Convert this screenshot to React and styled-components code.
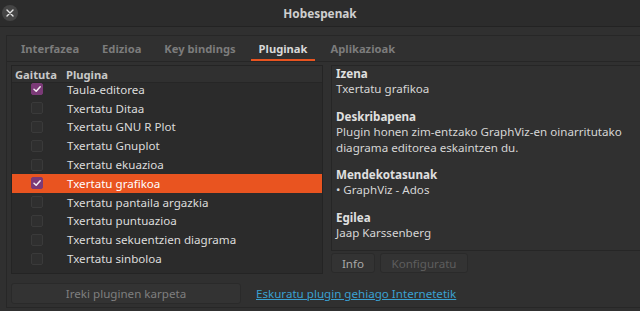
import React from "react";
import styled, { createGlobalStyle } from "styled-components";

const plugins = [
  { name: "Taula-editorea", on: true },
  { name: "Txertatu Ditaa" },
  { name: "Txertatu GNU R Plot" },
  { name: "Txertatu Gnuplot" },
  { name: "Txertatu ekuazioa" },
  { name: "Txertatu grafikoa", on: true, selected: true },
  { name: "Txertatu pantaila argazkia" },
  { name: "Txertatu puntuazioa" },
  { name: "Txertatu sekuentzien diagrama" },
  { name: "Txertatu sinboloa" },
];

const tabs = ["Interfazea", "Edizioa", "Key bindings", "Pluginak", "Aplikazioak"];

function App() {
  return (
    <>
      <GlobalStyle />
      <Window>
        <TitleBar>
          <CloseButton>
            <svg width="8" height="8" viewBox="0 0 8 8">
              <path d="M1 1L7 7M7 1L1 7" stroke="#e6e6e6" strokeWidth="1.4" strokeLinecap="round" />
            </svg>
          </CloseButton>
          <Title>Hobespenak</Title>
          <span />
        </TitleBar>

        <Notebook>
          <TabRow>
            {tabs.map((t) => (
              <Tab key={t} $active={t === "Pluginak"}>
                {t}
              </Tab>
            ))}
          </TabRow>

          <Page>
            <Columns>
              <TreeView>
                <TreeHeader>
                  <HeadCell $w="48px">Gaituta</HeadCell>
                  <HeadCell>Plugina</HeadCell>
                </TreeHeader>
                <RowsViewport>
                  <Rows>
                    {plugins.map((p) => (
                      <Row key={p.name} $selected={p.selected}>
                        <CheckCell>
                          <Check $on={p.on}>
                            {p.on && (
                              <svg width="10" height="10" viewBox="0 0 10 10">
                                <path
                                  d="M2 5.2L4.2 7.3L8.2 2.8"
                                  fill="none"
                                  stroke="#f4eef3"
                                  strokeWidth="1.5"
                                  strokeLinecap="round"
                                  strokeLinejoin="round"
                                />
                              </svg>
                            )}
                          </Check>
                        </CheckCell>
                        <NameCell>{p.name}</NameCell>
                      </Row>
                    ))}
                  </Rows>
                </RowsViewport>
              </TreeView>

              <Details>
                <InfoBox>
                  <Field>
                    <Label>Izena</Label>
                    <Value>Txertatu grafikoa</Value>
                  </Field>
                  <Field>
                    <Label>Deskribapena</Label>
                    <Value>
                      Plugin honen zim-entzako GraphViz-en oinarritutako
                      <br />
                      diagrama editorea eskaintzen du.
                    </Value>
                  </Field>
                  <Field>
                    <Label>Mendekotasunak</Label>
                    <Value>• GraphViz - Ados</Value>
                  </Field>
                  <Field>
                    <Label>Egilea</Label>
                    <Value>Jaap Karssenberg</Value>
                  </Field>
                </InfoBox>
                <ButtonRow>
                  <SmallButton $w="44px">Info</SmallButton>
                  <SmallButton $w="88px" $disabled>
                    Konfiguratu
                  </SmallButton>
                </ButtonRow>
              </Details>
            </Columns>

            <Footer>
              <WideButton>Ireki pluginen karpeta</WideButton>
              <Link href="#">Eskuratu plugin gehiago Internetetik</Link>
            </Footer>
          </Page>
        </Notebook>
      </Window>
    </>
  );
}

export default App;

const GlobalStyle = createGlobalStyle`
  html, body {
    margin: 0;
    padding: 0;
    background: #303030;
  }
  body {
    font-family: "Noto Sans", "DejaVu Sans", sans-serif;
    font-size: 11.6px;
    color: #dcdcdc;
  }
  * {
    box-sizing: border-box;
  }
`;

const Window = styled.div`
  width: 640px;
  height: 311px;
  overflow: hidden;
  display: flex;
  flex-direction: column;
  background: #303030;
`;

const TitleBar = styled.div`
  height: 27px;
  flex: none;
  display: grid;
  grid-template-columns: 1fr auto 1fr;
  align-items: center;
  padding: 0 2px;
  background: #2c2c2c;
  border-bottom: 1px solid #232323;
`;

const CloseButton = styled.div`
  width: 16px;
  height: 16px;
  border-radius: 50%;
  background: #454545;
  display: flex;
  align-items: center;
  justify-content: center;
`;

const Title = styled.div`
  font-weight: 700;
  font-size: 11.8px;
  color: #cfcfcf;
`;

const Notebook = styled.div`
  flex: 1;
  margin: 8px 0 3px 6px;
  border: 1px solid #272727;
  border-right: none;
  display: flex;
  flex-direction: column;
  min-height: 0;
`;

const TabRow = styled.div`
  height: 26px;
  flex: none;
  display: flex;
  padding-left: 6px;
  border-bottom: 1px solid #262626;
  background: #303030;
`;

const Tab = styled.div`
  padding: 0 8px;
  margin-right: 7px;
  display: flex;
  align-items: center;
  font-weight: 700;
  font-size: 11.2px;
  color: ${(p) => (p.$active ? "#d8d8d8" : "#7c7c7c")};
  box-shadow: ${(p) => (p.$active ? "inset 0 -2px 0 #e95420" : "none")};
`;

const Page = styled.div`
  flex: 1;
  display: flex;
  flex-direction: column;
  padding: 3px 0 0 4px;
  min-height: 0;
`;

const Columns = styled.div`
  display: grid;
  grid-template-columns: 312px 1fr;
  gap: 8px;
`;

const TreeView = styled.div`
  height: 209px;
  background: #2b2b2b;
  border: 1px solid #242424;
  display: flex;
  flex-direction: column;
  overflow: hidden;
`;

const TreeHeader = styled.div`
  height: 17px;
  flex: none;
  display: flex;
  align-items: center;
  background: #303030;
  border-bottom: 1px solid #262626;
  font-weight: 700;
  font-size: 11.2px;
  color: #c8c8c8;
`;

const HeadCell = styled.div`
  box-sizing: content-box;
  width: ${(p) => p.$w || "auto"};
  padding-left: 3px;
`;

const RowsViewport = styled.div`
  flex: 1;
  overflow: hidden;
`;

const Rows = styled.div`
  margin-top: -3px;
  display: flex;
  flex-direction: column;
`;

const Row = styled.div`
  height: 18.8px;
  flex: none;
  display: flex;
  align-items: center;
  background: ${(p) => (p.$selected ? "#e95420" : "transparent")};
  color: ${(p) => (p.$selected ? "#ffffff" : "#dcdcdc")};
`;

const CheckCell = styled.div`
  width: 55px;
  padding-left: 19px;
  display: flex;
`;

const Check = styled.div`
  width: 12px;
  height: 12px;
  border-radius: 2px;
  display: flex;
  align-items: center;
  justify-content: center;
  background: ${(p) => (p.$on ? "#7b3a77" : "#2f2f2f")};
  border: 1px solid ${(p) => (p.$on ? "#7b3a77" : "#3a3a3a")};
`;

const NameCell = styled.div`
  font-size: 11.6px;
`;

const Details = styled.div`
  display: flex;
  flex-direction: column;
  gap: 2px;
`;

const InfoBox = styled.div`
  height: 186px;
  padding: 0 4px;
  border: 1px solid #262626;
  border-right: none;
  background: #303030;
  display: flex;
  flex-direction: column;
  gap: 12px;
`;

const Field = styled.div`
  display: flex;
  flex-direction: column;
  line-height: 15.4px;
`;

const Label = styled.div`
  font-weight: 700;
  color: #e0e0e0;
`;

const Value = styled.div`
  color: #d6d6d6;
`;

const ButtonRow = styled.div`
  display: flex;
  gap: 5px;
`;

const SmallButton = styled.div`
  width: ${(p) => p.$w};
  height: 20px;
  display: flex;
  align-items: center;
  justify-content: center;
  border: 1px solid #2a2a2a;
  border-radius: 3px;
  background: #333333;
  color: ${(p) => (p.$disabled ? "#5e5e5e" : "#a8a8a8")};
`;

const Footer = styled.div`
  margin-top: 9px;
  display: flex;
  align-items: center;
  gap: 15px;
`;

const WideButton = styled.div`
  width: 230px;
  height: 21px;
  display: flex;
  align-items: center;
  justify-content: center;
  border: 1px solid #2a2a2a;
  border-radius: 3px;
  background: #333333;
  color: #7f7f7f;
`;

const Link = styled.a`
  color: #3aa0d0;
  text-decoration: underline;
`;
